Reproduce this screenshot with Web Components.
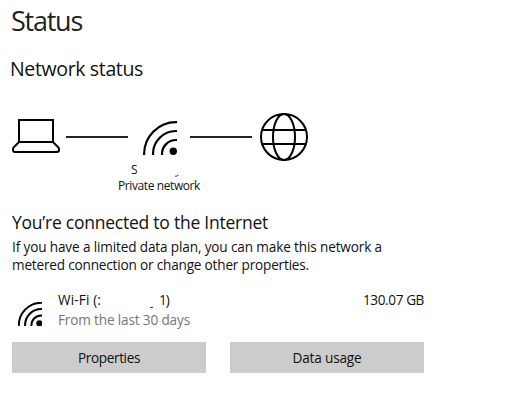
<!DOCTYPE html>
<html lang="en"><head><meta charset="utf-8"><title>Network status</title>
<style>body{margin:0;background:#fff;color:#111;font-family:"Open Sans","Noto Sans",sans-serif}</style></head>
<body><status-page></status-page>
<script>
const define=(name,html,setup)=>customElements.define(name,class extends HTMLElement{
  connectedCallback(){
    if(this.shadowRoot)return;
    this.attachShadow({mode:'open'}).innerHTML=html;
    if(setup)setup(this);
  }
});
// A single line of text whose tracking is adjusted to span the given width.
define('ui-text',`<style>:host{display:block;white-space:pre;width:max-content}span{display:inline-block}</style><span><slot></slot></span>`,el=>{
  const s=el.shadowRoot.querySelector('span'),w=parseFloat(el.getAttribute('span'));
  if(w)s.style.letterSpacing=(w-s.getBoundingClientRect().width)/el.textContent.length+'px';
});
define('laptop-icon',`<style>:host{display:block;width:48px;height:34px}svg{display:block}</style>
<svg width="48" height="34" fill="none" stroke="#000" stroke-width="2"><path d="M7 23V1H41V23M7 23H41L46.2 28.2Q47 29 47 30V31Q47 33 45 33H3Q1 33 1 31V30Q1 29 1.8 28.2Z"/></svg>`);
define('wifi-icon',`<style>:host{display:block;--w:2.2;--r:3.7px}svg{display:block;width:100%;height:100%}path{stroke-width:var(--w)}circle{r:var(--r)}</style>
<svg viewBox="0 0 34 34" fill="none" stroke="#000"><path d="M1.1 34V33A32 32 0 0 1 33 1.1H34M10 34V33A23 23 0 0 1 33 10H34M19 34V33A14 14 0 0 1 33 19H34"/><circle cx="30.3" cy="30.3" fill="#000" stroke="none"/></svg>`);
define('globe-icon',`<style>:host{display:block;width:48px;height:48px}svg{display:block}</style>
<svg width="48" height="48" fill="none" stroke="#000" stroke-width="2"><circle cx="24" cy="24" r="23"/><ellipse cx="24" cy="24" rx="11" ry="23"/><path d="M2 17H46M2 31H46"/></svg>`);
define('link-line',`<style>:host{display:block;width:62px;height:2px;background:#222}</style>`);
define('network-diagram',`<style>:host{display:block;position:relative;height:96px}
.r{display:grid;grid-template-columns:54px 77px 47px 70px 48px;align-items:center;height:48px}
wifi-icon{width:34px;height:34px;margin-top:2px}laptop-icon{margin-top:-2px}
.n{font-size:12px;line-height:16px;padding:1px 0 0 106px}.s{padding-left:13px}
.m{position:absolute;left:163px;top:61px;width:4px;height:3px}.m svg{display:block}</style>
<div class="r"><laptop-icon></laptop-icon><link-line></link-line><wifi-icon></wifi-icon><link-line></link-line><globe-icon></globe-icon></div>
<div class="n"><ui-text class="s" span="6">S</ui-text><ui-text span="82">Private network</ui-text></div>
<div class="m"><svg width="4" height="3"><path d="M0 2.2H1.5L3.5 1" fill="none" stroke="#333"/></svg></div>`);
define('usage-row',`<style>:host{display:grid;grid-template-columns:46px 1fr auto;font-size:13.6px;line-height:20px;height:52px}
wifi-icon{width:24px;height:24px;margin:12px 0 0 6px;--w:2.8;--r:4.4px}.t{display:flex;align-items:baseline}
.u{width:3px;height:1px;background:#333;margin:0 6px 2px 49px;align-self:flex-end}.g{color:#767676}</style>
<wifi-icon></wifi-icon><div><div class="t"><ui-text span="43">Wi-Fi (:</ui-text><span class="u"></span><ui-text span="10">1)</ui-text></div><ui-text class="g" span="132">From the last 30 days</ui-text></div><ui-text span="61">130.07 GB</ui-text>`);
define('ui-button',`<style>:host{display:block}button{display:flex;justify-content:center;align-items:center;width:194px;height:31px;border:0;padding:0;background:#ccc;color:#111;font:13.6px "Open Sans","Noto Sans",sans-serif}</style><button><slot></slot></button>`);
define('status-page',`<style>:host{display:block;width:412px;padding-left:12px}
.h1{font-size:27px;font-weight:375;color:#222;line-height:40px;margin-left:-1px;padding-top:1px}
.h2{font-size:19.5px;line-height:28px;margin:14px 0 30px -2px}
.h3{font-size:17.5px;line-height:24px;padding-top:1px}.p{font-size:13.6px;line-height:18px;margin-top:4px}
usage-row{margin-top:16px}.b{display:flex;gap:24px}</style>
<ui-text class="h1" span="71">Status</ui-text><ui-text class="h2" span="133">Network status</ui-text>
<network-diagram></network-diagram>
<ui-text class="h3" span="256">You’re connected to the Internet</ui-text>
<div class="p"><ui-text span="370">If you have a limited data plan, you can make this network a</ui-text><ui-text span="297">metered connection or change other properties.</ui-text></div>
<usage-row></usage-row>
<div class="b"><ui-button><ui-text span="62">Properties</ui-text></ui-button><ui-button><ui-text span="69">Data usage</ui-text></ui-button></div>`);
</script></body></html>
